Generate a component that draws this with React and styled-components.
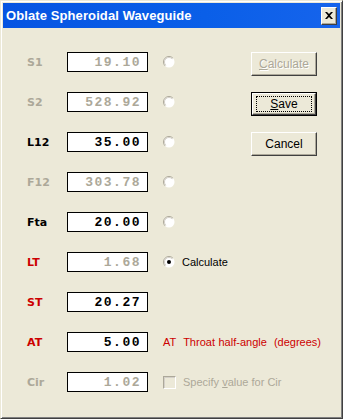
import React from "react";
import styled, { createGlobalStyle } from "styled-components";

const GlobalStyle = createGlobalStyle`
  html, body {
    margin: 0;
    padding: 0;
    background: #ffffff;
  }
  body {
    font-family: "Liberation Sans", Arial, sans-serif;
  }
`;

const Window = styled.div`
  width: 343px;
  height: 419px;
  box-sizing: border-box;
  background: #ece9d8;
  border-top: 1px solid #ece9d8;
  border-left: 1px solid #ece9d8;
  border-right: 1px solid #404040;
  border-bottom: 1px solid #404040;
  box-shadow: inset 1px 1px 0 #ffffff, inset -1px -1px 0 #808080,
    inset 2px 2px 0 #ece9d8, inset -2px -2px 0 #ece9d8;
  padding: 2px;
  display: flex;
  flex-direction: column;
`;

const TitleBar = styled.div`
  height: 25px;
  flex: none;
  background: linear-gradient(to right, #0654e2, #0a5fe8 60%, #1664ec);
  display: flex;
  align-items: center;
  justify-content: space-between;
  padding: 0 3px 0 3px;
  box-sizing: border-box;
`;

const Title = styled.span`
  color: #ffffff;
  font-family: "Liberation Sans", Arial, sans-serif;
  font-weight: bold;
  font-size: 13px;
  letter-spacing: 0.1px;
`;

const CloseButton = styled.div`
  width: 16px;
  height: 18px;
  box-sizing: border-box;
  background: #ece9d8;
  border-top: 1px solid #ffffff;
  border-left: 1px solid #ffffff;
  border-right: 1px solid #404040;
  border-bottom: 1px solid #404040;
  box-shadow: inset -1px -1px 0 #aca899;
  display: flex;
  align-items: center;
  justify-content: center;
`;

const Client = styled.div`
  flex: 1;
  display: flex;
  padding: 24px 0 0 24px;
`;

const Form = styled.div`
  display: flex;
  flex-direction: column;
  gap: 20px;
  width: 224px;
  flex: none;
`;

const Row = styled.div`
  height: 20px;
  display: flex;
  align-items: center;
  white-space: nowrap;
`;

const Label = styled.span`
  flex: none;
  width: 40px;
  font-family: "DejaVu Sans", Verdana, sans-serif;
  font-weight: bold;
  font-size: 11px;
  color: ${(p) =>
    p.tone === "red" ? "#cc0000" : p.tone === "grey" ? "#aca899" : "#000000"};
`;

const Field = styled.div`
  flex: none;
  width: 81px;
  height: 20px;
  box-sizing: border-box;
  border: 1px solid #000000;
  background: #ffffff;
  display: flex;
  align-items: center;
  justify-content: flex-end;
  padding-right: 6px;
  font-family: "Liberation Mono", "Courier New", monospace;
  font-weight: bold;
  font-size: 13px;
  letter-spacing: 1.5px;
  color: ${(p) => (p.disabled ? "#aca899" : "#000000")};
`;

const Extra = styled.div`
  flex: none;
  margin-left: 15px;
  display: flex;
  align-items: center;
  gap: 7px;
  font-family: "Liberation Sans", Arial, sans-serif;
  font-size: 11px;
  color: ${(p) =>
    p.tone === "red" ? "#cc0000" : p.tone === "grey" ? "#aca899" : "#000000"};
`;

const Note = styled.span`
  font-size: 11px;
  word-spacing: 0.5px;
`;

const Buttons = styled.div`
  flex: none;
  display: flex;
  flex-direction: column;
  gap: 16px;
`;

const Button = styled.div`
  width: 66px;
  height: 24px;
  box-sizing: border-box;
  background: #ece9d8;
  border-top: 1px solid #ffffff;
  border-left: 1px solid #ffffff;
  border-right: 1px solid #404040;
  border-bottom: 1px solid #404040;
  box-shadow: inset -1px -1px 0 #aca899;
  display: flex;
  align-items: center;
  justify-content: center;
  font-family: "Liberation Sans", Arial, sans-serif;
  font-size: 12px;
  color: ${(p) => (p.disabled ? "#aca899" : "#000000")};
  text-shadow: ${(p) => (p.disabled ? "1px 1px 0 #ffffff" : "none")};
  ${(p) =>
    p.primary &&
    `
    outline: 1px solid #000000;
    width: 64px;
    height: 22px;
    margin: 1px;
  `}
`;

const Focus = styled.span`
  display: flex;
  align-items: center;
  justify-content: center;
  width: 54px;
  height: 14px;
  border: 1px dotted #000000;
`;

const Check = styled.span`
  width: 13px;
  height: 13px;
  box-sizing: border-box;
  border-top: 1px solid #aca899;
  border-left: 1px solid #aca899;
  border-right: 1px solid #ffffff;
  border-bottom: 1px solid #ffffff;
  box-shadow: inset 1px 1px 0 #d4d0c8;
  background: #ece9d8;
`;

const Radio = ({ checked }) => (
  <svg width="12" height="12" viewBox="0 0 12 12">
    <circle cx="6" cy="6" r="5.5" fill="#ffffff" />
    <path d="M9.9 2.1 A5.5 5.5 0 0 0 2.1 9.9" fill="none" stroke="#aca899" strokeWidth="1" />
    <path d="M9.2 2.8 A4.5 4.5 0 0 0 2.8 9.2" fill="none" stroke="#d4d0c8" strokeWidth="1" />
    {checked && <circle cx="6" cy="6" r="2" fill="#000000" />}
  </svg>
);

const rows = [
  { label: "S1", value: "19.10", tone: "grey", disabled: true, radio: true },
  { label: "S2", value: "528.92", tone: "grey", disabled: true, radio: true },
  { label: "L12", value: "35.00", radio: true },
  { label: "F12", value: "303.78", tone: "grey", disabled: true, radio: true },
  { label: "Fta", value: "20.00", radio: true },
  { label: "LT", value: "1.68", tone: "red", disabled: true, calc: true },
  { label: "ST", value: "20.27", tone: "red" },
  { label: "AT", value: "5.00", tone: "red", note: true },
  { label: "Cir", value: "1.02", tone: "grey", disabled: true, check: true },
];

export default function App() {
  return (
    <>
      <GlobalStyle />
      <Window>
        <TitleBar>
          <Title>Oblate Spheroidal Waveguide</Title>
          <CloseButton>
            <svg width="8" height="7" viewBox="0 0 8 7">
              <path d="M0 0 L2 0 L4 2 L6 0 L8 0 L5 3.5 L8 7 L6 7 L4 5 L2 7 L0 7 L3 3.5 Z" fill="#000" />
            </svg>
          </CloseButton>
        </TitleBar>
        <Client>
          <Form>
            {rows.map((r) => (
              <Row key={r.label}>
                <Label tone={r.tone}>{r.label}</Label>
                <Field disabled={r.disabled}>{r.value}</Field>
                {r.radio && (
                  <Extra>
                    <Radio />
                  </Extra>
                )}
                {r.calc && (
                  <Extra>
                    <Radio checked />
                    <span>Calculate</span>
                  </Extra>
                )}
                {r.note && (
                  <Extra tone="red">
                    <Note>AT&nbsp; Throat half-angle&nbsp; (degrees)</Note>
                  </Extra>
                )}
                {r.check && (
                  <Extra tone="grey">
                    <Check />
                    <span>
                      Specify <u>v</u>alue for Cir
                    </span>
                  </Extra>
                )}
              </Row>
            ))}
          </Form>
          <Buttons>
            <Button disabled>
              <span>
                <u>C</u>alculate
              </span>
            </Button>
            <Button primary>
              <Focus>
                <u>S</u>ave
              </Focus>
            </Button>
            <Button>Cancel</Button>
          </Buttons>
        </Client>
      </Window>
    </>
  );
}
